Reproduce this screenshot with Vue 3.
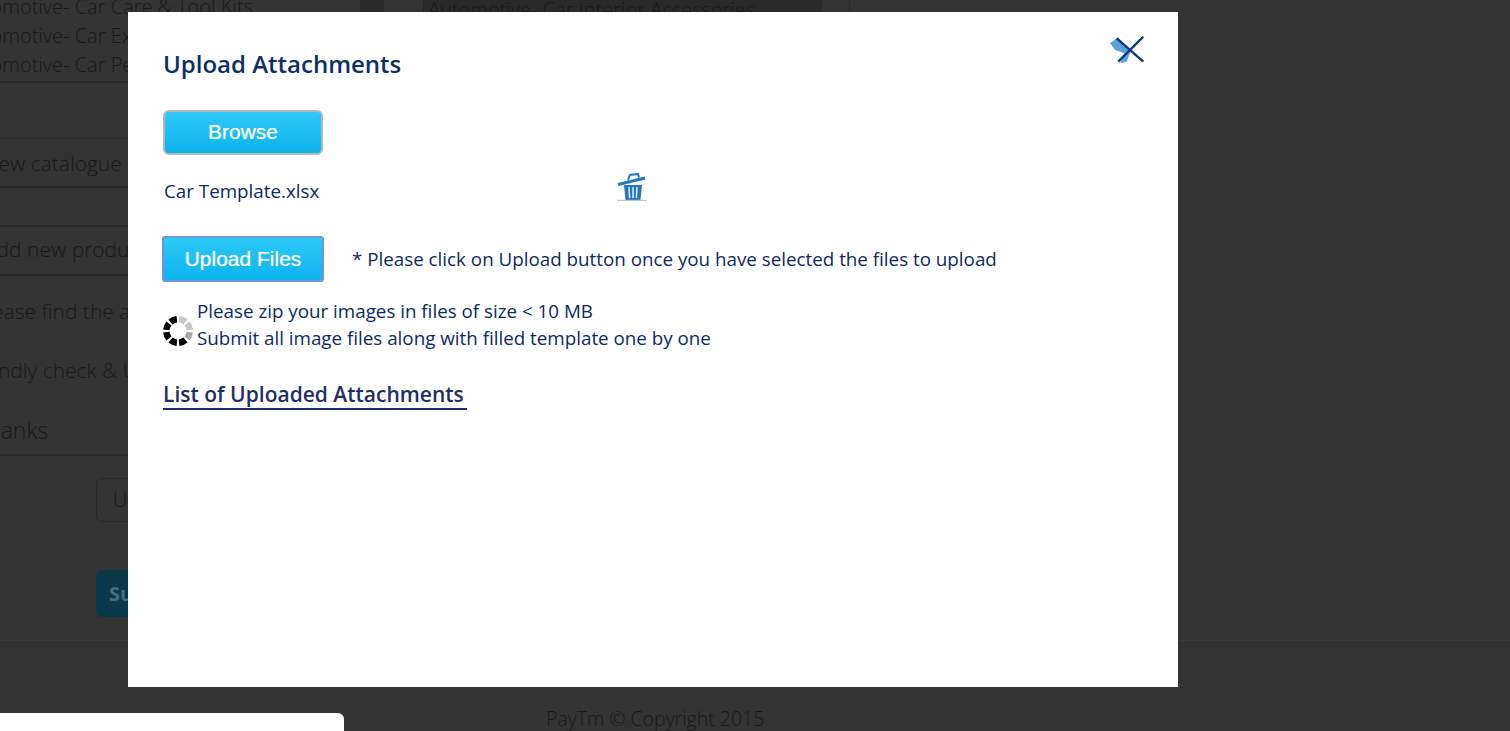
<script setup>
const topLines = ['Automotive- Car Care & Tool Kits', 'Automotive- Car Exterior Accessories', 'Automotive- Car Performance Parts']
const notes = ['Please find the attached template', 'Kindly check & Upload', 'Thanks']
const spinner = [
  { a: 22.5, c: '#c6c6c6' }, { a: 67.5, c: '#c6c6c6' }, { a: 112.5, c: '#a8a8a8' }, { a: 157.5, c: '#000' },
  { a: 202.5, c: '#000' }, { a: 247.5, c: '#000' }, { a: 292.5, c: '#000' }, { a: 337.5, c: '#000' }
]
</script>

<template>
  <div class="page">
    <div class="form">
      <div class="top-row">
        <div class="list-left">
          <p v-for="line in topLines" :key="line">{{ line }}</p>
        </div>
        <div class="scroll-left"></div>
        <div class="list-right">Automotive- Car Interior Accessories</div>
        <div class="edge"></div>
      </div>
      <div class="spacer-row"></div>
      <div class="form-row catalogue"><span>Add new catalogue</span></div>
      <div class="form-row blank"></div>
      <div class="form-row product"><span>Add new product</span></div>
      <div class="notes">
        <p v-for="(n, i) in notes" :key="n" :class="'note' + i">{{ n }}</p>
      </div>
    </div>
    <div class="actions">
      <div class="ghost-btn">Upload</div>
      <div class="submit-btn">Submit</div>
    </div>
    <div class="footer">PayTm © Copyright 2015</div>
  </div>

  <div class="toast"></div>

  <div class="modal">
    <svg class="close" viewBox="0 0 36 30" width="36" height="30">
      <path class="flag" d="M0 7 L8.3 1.3 L16.7 12.3 L21.7 12.3 L16.7 25.7 L10.3 27.3 L14.3 17.3 L5 14 Z" fill="#4a96d4" />
      <path d="M6.7 2.3 L33.3 25.7 M33.3 0.7 L8.3 25.7" stroke="#0d3a7c" stroke-width="2.4" fill="none" />
    </svg>

    <h2 class="title">Upload Attachments</h2>
    <button class="btn browse">Browse</button>

    <div class="file-row">
      <span class="file-name">Car Template.xlsx</span>
      <svg class="trash" viewBox="0 0 30 28" width="30" height="28">
        <path d="M1 11.5 L28 5" stroke="#2277bd" stroke-width="3" fill="none" />
        <path d="M11 7 L13 2 L21 1 L22 4.5" stroke="#2277bd" stroke-width="2" fill="none" />
        <path d="M7 12 H25 L23.5 27 H8.5 Z" fill="#2277bd" />
        <path d="M12 14 L12.6 25 M16 14 V25 M20 14 L19.4 25" stroke="#d6e6f4" stroke-width="1.6" />
        <rect x="0" y="26.8" width="30" height="1.2" fill="#b9c6d2" />
      </svg>
    </div>

    <div class="upload-row">
      <button class="btn upload">Upload Files</button>
      <span class="hint">* Please click on Upload button once you have selected the files to upload</span>
    </div>

    <div class="zip-row">
      <svg class="spinner" viewBox="0 0 30 30" width="30" height="30">
        <g v-for="s in spinner" :key="s.a" :transform="'rotate(' + s.a + ' 15 15)'">
          <path d="M10.6 0.66 A15 15 0 0 1 19.4 0.66 L17.5 6.87 A8.5 8.5 0 0 0 12.5 6.87 Z" :fill="s.c" />
        </g>
      </svg>
      <div class="zip-text">
        <div>Please zip your images in files of size &lt; 10 MB</div>
        <div>Submit all image files along with filled template one by one</div>
      </div>
    </div>

    <h3 class="list-title">List of Uploaded Attachments</h3>
  </div>
</template>

<style scoped>
.page {
  height: 731px;
  overflow: hidden;
  background: #333333;
  font-family: "Open Sans", sans-serif;
  font-weight: 300;
  font-size: 20px;
  color: #191919;
}

p {
  margin: 0;
}

.form {
  width: 1100px;
}

.top-row {
  height: 81px;
  display: flex;
  border-bottom: 2px solid #2a2a2a;
  overflow: hidden;
}

.list-left {
  width: 360px;
  margin-left: -40px;
  margin-top: -8px;
  flex-shrink: 0;
  line-height: 29px;
  white-space: nowrap;
}

.scroll-left {
  width: 24px;
  height: 12px;
  margin-left: 40px;
  margin-right: 39px;
  flex-shrink: 0;
  background: #2b2b2b;
}

.list-right {
  width: 399px;
  height: 12px;
  flex-shrink: 0;
  border-left: 1px solid #262626;
  padding-left: 4px;
  line-height: 20px;
  white-space: nowrap;
  box-sizing: border-box;
  background: #2a2a2a;
}

.edge {
  width: 1px;
  height: 12px;
  margin-left: 27px;
  background: #2a2a2a;
}

.spacer-row {
  height: 54px;
  border-bottom: 2px solid #2d2d2d;
}

.form-row {
  display: flex;
  align-items: center;
  font-size: 21px;
  white-space: nowrap;
  border-bottom: 2px solid #2a2a2a;
}

.catalogue {
  height: 47px;
}

.catalogue span {
  margin-left: -57px;
}

.blank {
  height: 37px;
}

.product {
  height: 44px;
  padding-bottom: 3px;
}

.product span {
  margin-left: -16px;
}

.notes {
  height: 158px;
  padding-top: 20px;
  border-bottom: 2px solid #2a2a2a;
  font-size: 21px;
  white-space: nowrap;
  line-height: 30px;
}

.note0 {
  margin-left: -25px;
}

.note1 {
  margin-left: -19px;
  margin-top: 29px;
}

.note2 {
  margin-left: -25px;
  margin-top: 30px;
  font-size: 23px;
}

.actions {
  height: 185px;
  padding-left: 96px;
  padding-top: 22px;
  box-sizing: border-box;
  border-bottom: 1px solid #3b3b3b;
}

.ghost-btn {
  width: 120px;
  height: 44px;
  border: 1px solid #262626;
  border-radius: 6px;
  padding-left: 16px;
  line-height: 42px;
  box-sizing: border-box;
}

.submit-btn {
  width: 120px;
  height: 47px;
  margin-top: 48px;
  background: #07394a;
  border-radius: 6px;
  padding-left: 13px;
  line-height: 47px;
  font-weight: 700;
  color: #3f7080;
  box-sizing: border-box;
}

.footer {
  margin-top: 64px;
  padding-left: 546px;
  font-size: 19.5px;
  line-height: 28px;
  white-space: nowrap;
}

.toast {
  position: absolute;
  left: 0;
  top: 713px;
  width: 344px;
  height: 18px;
  background: #fff;
  border-top-right-radius: 6px;
}

.modal {
  position: absolute;
  left: 128px;
  top: 12px;
  width: 1050px;
  height: 675px;
  padding: 35px 35px 0;
  box-sizing: border-box;
  background: #fff;
  font-family: "Open Sans", sans-serif;
  font-size: 18.8px;
  color: #0b2a66;
}

.close {
  position: absolute;
  left: 982px;
  top: 24px;
}

.flag {
  opacity: 0.9;
  filter: blur(0.6px);
}

.title {
  margin: 0;
  font-size: 24px;
  font-weight: 600;
  line-height: 34px;
  color: #0b2f6b;
}

.btn {
  display: block;
  padding: 0;
  font-family: "Liberation Sans", sans-serif;
  font-size: 21px;
  color: #fff;
  text-shadow: 0 0 1px rgba(255, 255, 255, 0.6);
  background: linear-gradient(#2dc9f8, #0cb3ee);
  border-radius: 6px;
}

.browse {
  width: 160px;
  height: 45px;
  margin-top: 29px;
  padding-bottom: 2px;
  border: 2px solid #b5b8ba;
}

.file-row {
  display: flex;
  align-items: flex-start;
  height: 33px;
  margin-top: 18px;
}

.file-name {
  width: 453px;
  margin-left: 1px;
  margin-top: 4px;
  line-height: 28px;
}

.upload-row {
  display: flex;
  align-items: center;
  gap: 28px;
  margin-top: 30px;
  margin-left: -1px;
}

.upload {
  width: 162px;
  height: 46px;
  border: 2px solid #7095dd;
  border-radius: 3px;
}

.hint {
  white-space: nowrap;
}

.zip-row {
  display: flex;
  align-items: center;
  gap: 4px;
  margin-top: 16px;
}

.zip-text {
  line-height: 27px;
  white-space: nowrap;
}

.spinner {
  margin-top: 11px;
  flex-shrink: 0;
}

.list-title {
  display: table;
  margin: 29px 0 0;
  padding-right: 3px;
  font-size: 21px;
  font-weight: 600;
  line-height: 27px;
  color: #1f2f66;
  border-bottom: 2px solid #1f2f66;
}
</style>
